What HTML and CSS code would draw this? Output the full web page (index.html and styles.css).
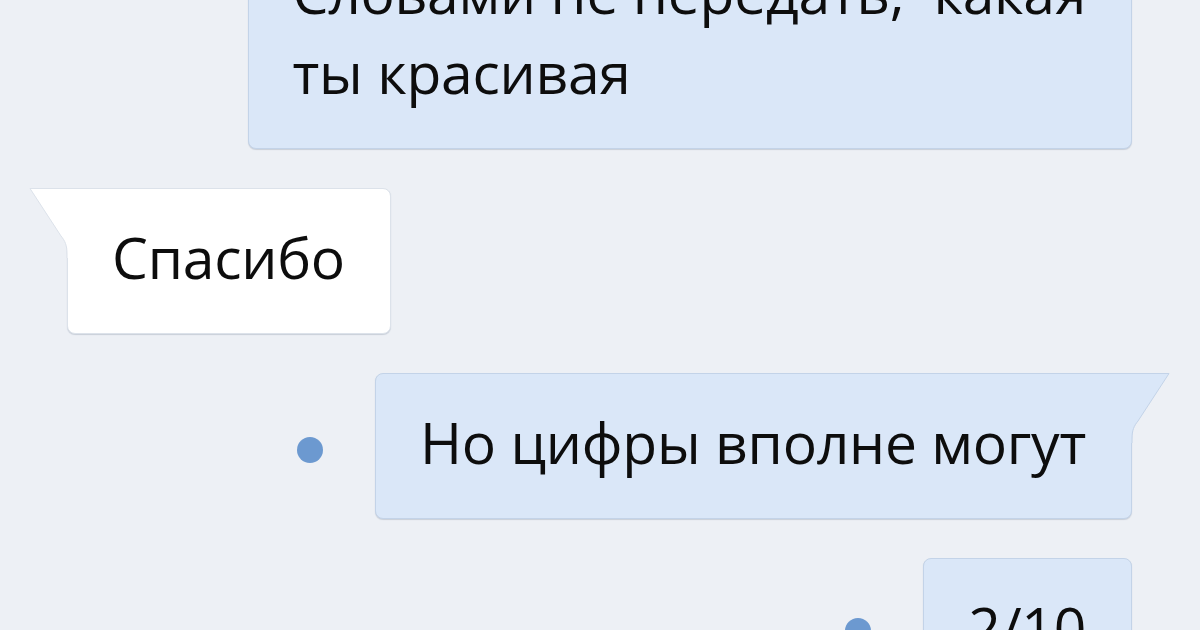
FILE: index.html
```html
<!DOCTYPE html>
<html lang="ru">
<head>
  <meta charset="UTF-8" />
  <meta name="viewport" content="width=device-width, initial-scale=1.0"/>
  <title>Диалог</title>
  <link rel="stylesheet" href="styles.css">
</head>
<body>
  <div class="chat">
    <div class="row out">
      <div class="bubble blue multiline">Словами не передать,&nbsp; какая<br>ты красивая</div>
    </div>

    <div class="row in">
      <div class="bubble white has-tail">
        <svg class="tail tail-left" width="42" height="70" viewBox="0 0 42 70">
          <path class="tail-fill" d="M1 0.5 L42 0.5 L42 70 L38 70 L38 66 C38 57 36 53 32 48 Z"/>
          <path class="tail-line" d="M38 70 L38 66 C38 57 36 53 32 48 L1 0.5 L42 0.5"/>
        </svg>
        Спасибо
      </div>
    </div>

    <div class="row out">
      <span class="unread low"></span>
      <div class="bubble blue has-tail">
        <svg class="tail tail-right" width="42" height="70" viewBox="0 0 42 70">
          <path class="tail-fill" d="M1 0.5 L42 0.5 L42 70 L38 70 L38 66 C38 57 36 53 32 48 Z"/>
          <path class="tail-line" d="M38 70 L38 66 C38 57 36 53 32 48 L1 0.5 L42 0.5"/>
        </svg>
        Но цифры вполне могут
      </div>
    </div>

    <div class="row out">
      <span class="unread"></span>
      <div class="bubble blue">2/10</div>
    </div>
  </div>
</body>
</html>
```

FILE: styles.css
```css
* {
  box-sizing: border-box;
}
html, body {
  height: 100%;
}
body {
  margin: 0;
  background: #edf0f5;
  color: #0d0d0d;
  font-family: "Open Sans", "DejaVu Sans", sans-serif;
  overflow: hidden;
}
.chat {
  display: flex;
  flex-direction: column;
  gap: 39px;
  margin-top: -82px;
}
.row {
  display: flex;
  align-items: center;
}
.row.out {
  justify-content: flex-end;
  padding-right: 68px;
}
.row.in {
  justify-content: flex-start;
  padding-left: 67px;
}
.bubble {
  position: relative;
  font-size: 57px;
  line-height: 70px;
  letter-spacing: -0.25px;
  padding: 33px 45px 41px 44px;
  border: 1px solid;
  border-radius: 8px;
  box-shadow: 0 1px 1px rgba(60, 80, 110, 0.2);
  white-space: nowrap;
}
.bubble.multiline {
  line-height: 80px;
  padding-bottom: 36px;
}
.blue {
  background: #dae7f8;
  border-color: #c3d3e8;
}
.white {
  background: #ffffff;
  border-color: #dce2ea;
}
.in .has-tail {
  border-top-left-radius: 0;
}
.out .has-tail {
  border-top-right-radius: 0;
}
.tail {
  position: absolute;
  top: -1px;
}
.tail-left {
  left: -39px;
}
.tail-right {
  right: -39px;
  transform: scaleX(-1);
}
.tail-line {
  fill: none;
  stroke-width: 1;
}
.white .tail-fill {
  fill: #ffffff;
}
.white .tail-line {
  stroke: #dce2ea;
}
.blue .tail-fill {
  fill: #dae7f8;
}
.blue .tail-line {
  stroke: #c3d3e8;
}
.unread {
  width: 26px;
  height: 26px;
  border-radius: 50%;
  background: #6c99d0;
  margin-right: 52px;
  flex-shrink: 0;
}
.unread.low {
  margin-top: 8px;
}
```
